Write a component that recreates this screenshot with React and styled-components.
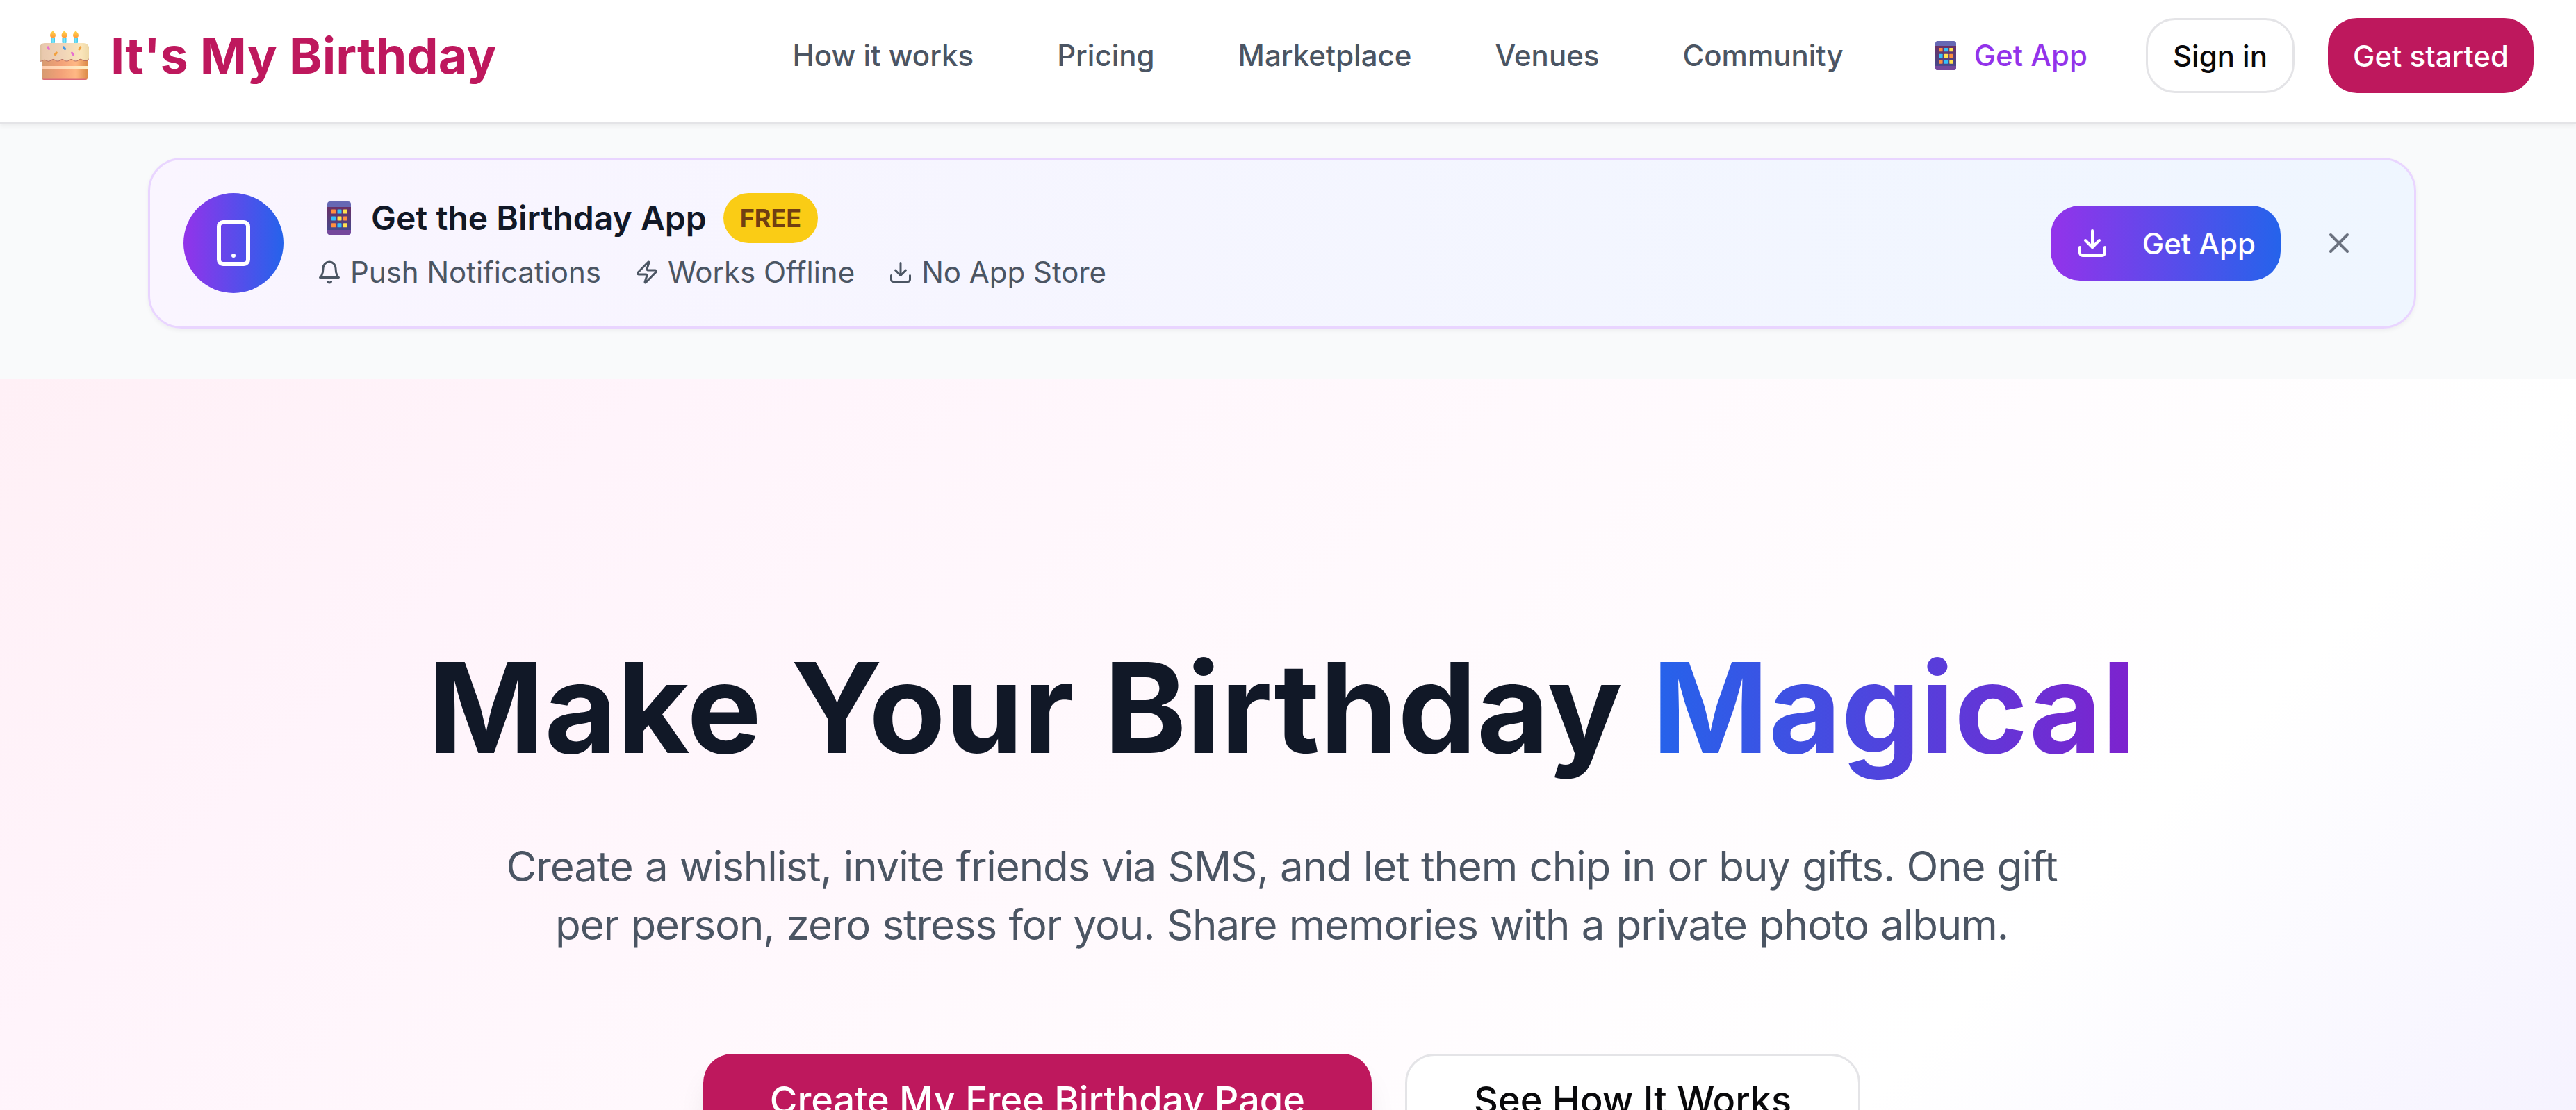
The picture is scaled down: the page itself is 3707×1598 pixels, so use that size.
import React, { useState } from "react";
import styled, { createGlobalStyle } from "styled-components";
import { Download, Smartphone, X, Zap } from "lucide-react";


/* Styled Components */

const GlobalStyle = createGlobalStyle`
  * {
    box-sizing: border-box;
  }

  body {
    margin: 0;
    font-family: Inter, "Liberation Sans", sans-serif;
    background-color: #f9fafb;
    overflow: hidden;
  }

  h1, h3, p {
    margin: 0;
  }
`;

const Page = styled.div`
  height: 1598px;
  display: flex;
  flex-direction: column;
  overflow: hidden;
`;

/* Header */

const ContentHeader = styled.header`
  flex: none;
  display: flex;
  align-items: center;
  height: 179px;
  padding: 0 61px 16px 48px;
  border-bottom: 3px solid #e4e4e7;
  background-color: white;
  box-shadow: 0 3px 6px rgba(0, 0, 0, 0.05);
`;

const Logo = styled.a`
  display: flex;
  align-items: center;
  gap: 30px;
  padding-left: 9px;
  color: #be185d;
  font-size: 72px;
  font-weight: 700;
  line-height: 96px;
  white-space: nowrap;
`;

const NavMenu = styled.nav`
  display: flex;
  align-items: center;
  gap: 120px;
  margin-left: auto;
`;

const NavLink = styled.a`
  display: flex;
  align-items: center;
  gap: 26px;
  margin-left: ${(props) => (props.$accent ? "12px" : "0")};
  color: ${(props) => (props.$accent ? "#9333ea" : "#4b5563")};
  font-size: 42px;
  font-weight: 500;
  line-height: 60px;
  white-space: nowrap;
`;

const HeaderButtons = styled.div`
  display: flex;
  gap: 48px;
  margin-left: 84px;
`;

const Button = styled.button`
  display: flex;
  align-items: center;
  justify-content: center;
  gap: 48px;
  height: ${(props) => (props.$large ? "132px" : "108px")};
  padding: 0 ${(props) => (props.$large ? "96px" : "36px")};
  border: ${(props) => (props.$outline ? "3px solid #e4e4e7" : "none")};
  border-radius: 42px;
  outline: none;
  cursor: pointer;
  color: ${(props) => (props.$outline ? "#09090b" : "white")};
  background-color: ${(props) => (props.$outline ? "white" : "#be185d")};
  font-family: inherit;
  font-size: ${(props) => (props.$large ? "54px" : "42px")};
  font-weight: 500;
  white-space: nowrap;
`;

const ShadowButton = styled(Button)`
  box-shadow: 0 30px 45px -9px rgba(0, 0, 0, 0.1), 0 12px 18px -12px rgba(0, 0, 0, 0.1);
`;

const GradientButton = styled(Button)`
  background: linear-gradient(to right, #9333ea, #2563eb);
`;

/* App banner */

const BannerWrap = styled.div`
  flex: none;
  height: 366px;
  padding: 48px 230px 0 213px;
`;

const Banner = styled.section`
  display: flex;
  align-items: center;
  height: 246px;
  padding: 0 48px;
  border: 3px solid #e9d5ff;
  border-radius: 48px;
  background: linear-gradient(to right, #faf5ff, #eff6ff);
  background-origin: border-box;
  box-shadow: 0 3px 6px rgba(0, 0, 0, 0.05);
`;

const PhoneCircle = styled.div`
  display: flex;
  align-items: center;
  justify-content: center;
  width: 144px;
  height: 144px;
  border-radius: 50%;
  color: white;
  background: linear-gradient(to right, #9333ea, #2563eb);
`;

const BannerText = styled.div`
  display: flex;
  flex-direction: column;
  gap: 12px;
  margin-left: 48px;
`;

const BannerTitle = styled.div`
  display: flex;
  align-items: center;
  gap: 24px;
  height: 72px;
`;

const BannerHeading = styled.h3`
  display: flex;
  align-items: center;
  gap: 29px;
  padding-left: 15px;
  color: #111827;
  font-size: 48px;
  font-weight: 600;
  line-height: 72px;
  white-space: nowrap;
`;

const FreeBadge = styled.span`
  padding: 12px 24px;
  border-radius: 36px;
  color: #713f12;
  background-color: #facc15;
  font-size: 36px;
  font-weight: 700;
  line-height: 48px;
`;

const Features = styled.div`
  display: flex;
  gap: 48px;
`;

const Feature = styled.span`
  display: flex;
  align-items: center;
  gap: 12px;
  color: #4b5563;
  font-size: 42px;
  line-height: 60px;
  white-space: nowrap;
`;

const BannerActions = styled.div`
  display: flex;
  align-items: center;
  gap: 24px;
  margin-left: auto;
`;

const CloseButton = styled.button`
  display: flex;
  align-items: center;
  justify-content: center;
  width: 120px;
  height: 108px;
  padding: 0;
  border: none;
  cursor: pointer;
  color: #6b7280;
  background: none;
`;

/* Hero */

const HeroSection = styled.main`
  flex: 1;
  display: flex;
  flex-direction: column;
  align-items: center;
  padding: 384px 18px 0 0;
  background: linear-gradient(135deg, #fff0f6 0%, #fff4fb 20%, #ffffff 77.5%, #f5f2ff 100%);
`;

const HeroTitle = styled.h1`
  color: #111827;
  font-size: 180px;
  font-weight: 700;
  line-height: 180px;
  white-space: nowrap;
`;

const Magical = styled.span`
  color: transparent;
  background: linear-gradient(to right, #2563eb, #7e22ce);
  background-clip: text;
  -webkit-background-clip: text;
  padding-bottom: 20px;
`;

const HeroText = styled.p`
  width: 2304px;
  margin-top: 96px;
  color: #4b5563;
  font-size: 60px;
  line-height: 84px;
  letter-spacing: -1.1px;
  word-spacing: 1.55px;
  text-align: center;
`;

const HeroButtons = styled.div`
  display: flex;
  gap: 48px;
  margin-top: 144px;
`;


/* Icons */

const BirthdayCake = () => (
  <svg width="72" height="74" viewBox="0 0 72 74" fill="none">
    <defs>
      <linearGradient id="cakeBase" x1="0" x2="1">
        <stop offset="0" stopColor="#d69a70" />
        <stop offset="0.4" stopColor="#f2a077" />
        <stop offset="0.75" stopColor="#ffb884" />
        <stop offset="1" stopColor="#dd8d49" />
      </linearGradient>
      <linearGradient id="cakeCream" x1="0" x2="1">
        <stop offset="0" stopColor="#ffcbae" />
        <stop offset="1" stopColor="#fff0c4" />
      </linearGradient>
      <linearGradient id="cakeIcing" x1="0" x2="1">
        <stop offset="0" stopColor="#c9b48c" />
        <stop offset="0.13" stopColor="#e9c9ae" />
        <stop offset="0.5" stopColor="#f0d4b8" />
        <stop offset="0.85" stopColor="#fae5ba" />
        <stop offset="1" stopColor="#eed9a8" />
      </linearGradient>
      <linearGradient id="cakeFlame" x1="0" y1="0" x2="0" y2="1">
        <stop offset="0" stopColor="#ffdc4a" />
        <stop offset="1" stopColor="#ff9838" />
      </linearGradient>
      <linearGradient id="cakeCandle" x1="0" x2="1">
        <stop offset="0" stopColor="#42b9d8" />
        <stop offset="0.5" stopColor="#7ee9fc" />
        <stop offset="1" stopColor="#3fc4e6" />
      </linearGradient>
    </defs>
    <path d="M3 34h66v35a3 3 0 0 1-3 3H6a3 3 0 0 1-3-3z" fill="url(#cakeBase)" />
    <path d="M4 70.5q1 1.500 3 1.500h58q2 0 3-1.500z" fill="#d9687c" />
    <path d="M3 52h66v5H3z" fill="url(#cakeCream)" />
    {/* drip edge, drawn once for the shadow and once for the icing */}
    <path transform="translate(0 1)" d="M0 27q0-8 8-8h55q8 0 8 8v13q0 4-5 4-3 0-5-1.500-2.500-1.500-5 .5-4 3-8 0-2.500-2-5 0-4 3-8 0-2.500-2-5 0-4 3-8 0-2.500-2-5 0-4 3-8 .5-2-1.500-5 .5-2 1-4 .5-5-.5-5-4z" fill="#b76d61" />
    <path d="M0 27q0-8 8-8h55q8 0 8 8v13q0 4-5 4-3 0-5-1.500-2.500-1.500-5 .5-4 3-8 0-2.500-2-5 0-4 3-8 0-2.500-2-5 0-4 3-8 0-2.500-2-5 0-4 3-8 .5-2-1.500-5 .5-2 1-4 .5-5-.5-5-4z" fill="url(#cakeIcing)" />
    {[19, 35.5, 52].map((x) => (
      <g key={x} transform={`translate(${x} 0)`}>
        <rect x="-3" y="11" width="6" height="8" rx="1" fill="url(#cakeCandle)" />
        <path d="M0 .8C1.500 3.500 4 5 4 7.600a4 4 0 0 1-8 0C-4 5-1.500 3.500 0 .8z" fill="url(#cakeFlame)" />
      </g>
    ))}
    <g strokeWidth="3.200" strokeLinecap="round">
      <path d="M12 25l1.500 2.500M46.500 33.300l2 2.300" stroke="#e76fd0" />
      <path d="M34.500 25l2 2.500" stroke="#3f97e6" />
      <path d="M58.800 25l-1.800 2.800M24.300 33l-2 2.600" stroke="#f2a13f" />
    </g>
  </svg>
);

const MobilePhone = ({ width, height }) => {
  const colors = ["#ff8f3f", "#33c1fb", "#ffe24f", "#33c1fb", "#ffe24f", "#ff8f3f", "#ff8f3f", "#33c1fb", "#ffe24f"];
  return (
    <svg width={width} height={height} viewBox="0 0 34 48" preserveAspectRatio="none">
      <defs>
        <linearGradient id="phoneScreen" x1="0" y1="0" x2="0" y2="1">
          <stop offset="0" stopColor="#6a3066" />
          <stop offset="1" stopColor="#47488a" />
        </linearGradient>
      </defs>
      <rect width="34" height="48" rx="4" fill="#6668b4" />
      <path d="M0 40h34v4a4 4 0 0 1-4 4H4a4 4 0 0 1-4-4z" fill="#75489c" />
      <path d="M0 8h34v33H0z" fill="url(#phoneScreen)" />
      {colors.map((color, i) => (
        <rect key={i} x={6 + (i % 3) * 8.5} y={11.5 + Math.floor(i / 3) * 9.9} width="6" height="6" rx="0.6" fill={color} />
      ))}
    </svg>
  );
};

const Bell = () => (
  <svg width="36" height="36" viewBox="0 0 24 24" fill="none" stroke="currentColor" strokeWidth="2" strokeLinecap="round" strokeLinejoin="round">
    <path d="M6 8a6 6 0 0 1 12 0c0 7 3 9 3 9H3s3-2 3-9" />
    <path d="M10.300 21a1.940 1.940 0 0 0 3.400 0" />
  </svg>
);


const navItems = ["How it works", "Pricing", "Marketplace", "Venues", "Community"];

const Header = () => (
  <ContentHeader>
    <Logo>
      <BirthdayCake />
      It's My Birthday
    </Logo>
    <NavMenu>
      {navItems.map((item) => (
        <NavLink key={item}>{item}</NavLink>
      ))}
      <NavLink $accent>
        <MobilePhone width={30} height={42} />
        Get App
      </NavLink>
    </NavMenu>
    <HeaderButtons>
      <Button $outline>Sign in</Button>
      <Button>Get started</Button>
    </HeaderButtons>
  </ContentHeader>
);

const AppBanner = ({ onClose }) => (
  <Banner>
    <PhoneCircle>
      <Smartphone size={72} />
    </PhoneCircle>
    <BannerText>
      <BannerTitle>
        <BannerHeading>
          <MobilePhone width={34} height={48} />
          Get the Birthday App
        </BannerHeading>
        <FreeBadge>FREE</FreeBadge>
      </BannerTitle>
      <Features>
        <Feature><Bell />Push Notifications</Feature>
        <Feature><Zap size={36} />Works Offline</Feature>
        <Feature><Download size={36} />No App Store</Feature>
      </Features>
    </BannerText>
    <BannerActions>
      <GradientButton>
        <Download size={48} />
        Get App
      </GradientButton>
      <CloseButton onClick={onClose} aria-label="Close">
        <X size={48} />
      </CloseButton>
    </BannerActions>
  </Banner>
);

const App = () => {
  const [isBannerOpen, setIsBannerOpen] = useState(true);

  return (
    <>
      <GlobalStyle />
      <Page>
        <Header />
        <BannerWrap>
          {isBannerOpen && <AppBanner onClose={() => setIsBannerOpen(false)} />}
        </BannerWrap>
        <HeroSection>
          <HeroTitle>
            Make Your Birthday <Magical>Magical</Magical>
          </HeroTitle>
          <HeroText>
            Create a wishlist, invite friends via SMS, and let them chip in or buy gifts. One gift
            <br />
            per person, zero stress for you. Share memories with a private photo album.
          </HeroText>
          <HeroButtons>
            <ShadowButton $large>Create My Free Birthday Page</ShadowButton>
            <Button $large $outline>See How It Works</Button>
          </HeroButtons>
        </HeroSection>
      </Page>
    </>
  );
};

export default App;
